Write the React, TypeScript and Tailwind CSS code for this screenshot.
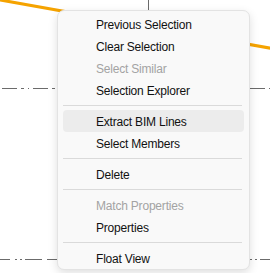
import React from 'react'

type Item = { label: string; disabled?: boolean; hover?: boolean } | 'sep'

const items: Item[] = [
  { label: 'Previous Selection' },
  { label: 'Clear Selection' },
  { label: 'Select Similar', disabled: true },
  { label: 'Selection Explorer' },
  'sep',
  { label: 'Extract BIM Lines', hover: true },
  { label: 'Select Members' },
  'sep',
  { label: 'Delete' },
  'sep',
  { label: 'Match Properties', disabled: true },
  { label: 'Properties' },
  'sep',
  { label: 'Float View' },
]

export default function App() {
  return (
    <div className="relative w-[270px] h-[273px] overflow-hidden bg-white font-['Liberation_Sans',Arial,sans-serif]">
      {/* drawing canvas behind the menu */}
      <svg className="absolute inset-0" width="270" height="273" viewBox="0 0 270 273">
        <line x1="-5" y1="-1" x2="275" y2="49" stroke="#f5a300" strokeWidth="3" />
        <line x1="148.5" y1="0" x2="148.5" y2="12" stroke="#6b6b6b" strokeWidth="1" />
        <line x1="2" y1="88.5" x2="270" y2="88.5" stroke="#6b6b6b" strokeWidth="1" strokeDasharray="15 4 3 4 1 4" />
        <line x1="0" y1="259.5" x2="270" y2="259.5" stroke="#6b6b6b" strokeWidth="1" strokeDasharray="10 5 2 3 2 3 17 5" />
      </svg>

      {/* context menu */}
      <div className="absolute left-[57px] top-[10px] w-[193px] h-[260px] rounded-[7px] border border-[#e3e3e3] bg-[#f9f9f9] pt-[2px] shadow-[0_3px_10px_rgba(0,0,0,0.13)]">
        {items.map((item, i) =>
          item === 'sep' ? (
            <div key={i} className="h-[9px] flex items-center px-[5px]">
              <div className="h-px w-[179px] bg-[#dadada]" />
            </div>
          ) : (
            <div
              key={i}
              className={
                'mx-[5px] h-[22px] rounded-[4px] pl-[33px] pt-[2px] flex items-center text-[12px] tracking-[-0.2px] leading-none ' +
                (item.hover ? 'bg-[#ececec] ' : '') +
                (item.disabled ? 'text-[#a3a3a3]' : 'text-[#111]')
              }
            >
              {item.label}
            </div>
          )
        )}
      </div>
    </div>
  )
}
